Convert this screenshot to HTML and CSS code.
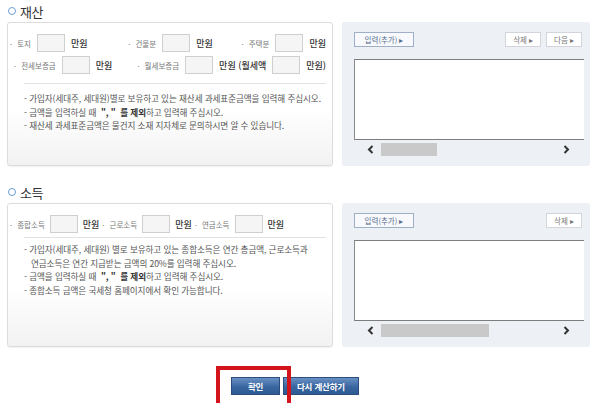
FILE: index.html
```html
<!DOCTYPE html>
<html lang="ko">
<head>
    <meta charset="UTF-8">
    <title>재산 / 소득 입력</title>
    <link rel="stylesheet" href="styles.css">
</head>
<body>
    <div class="page">
        <section class="block">
            <h2 class="block-title"><span class="ring"></span>재산</h2>
            <div class="block-body">
                <div class="form-box">
                    <div class="field-row">
                        <div class="field w120"><span class="label">· 토지</span><input class="amount" type="text"><span class="unit">만원</span></div>
                        <div class="field w115"><span class="label">· 건물분</span><input class="amount" type="text"><span class="unit">만원</span></div>
                        <div class="field"><span class="label">· 주택분</span><input class="amount" type="text"><span class="unit">만원</span></div>
                    </div>
                    <div class="field-row row-shift">
                        <div class="field w131"><span class="label">· 전세보증금</span><input class="amount" type="text"><span class="unit">만원</span></div>
                        <div class="field"><span class="label">· 월세보증금</span><input class="amount" type="text"><span class="unit">만원 (월세액</span><input class="amount" type="text"><span class="unit">만원)</span></div>
                    </div>
                    <hr class="divider">
                    <ul class="notes">
                        <li>- 가입자(세대주, 세대원)별로 보유하고 있는 재산세 과세표준금액을 입력해 주십시오.</li>
                        <li>- 금액을 입력하실 때 &nbsp;<b>",&nbsp;" &nbsp;를 제외</b>하고 입력해 주십시오.</li>
                        <li>- 재산세 과세표준금액은 물건지 소재 지자체로 문의하시면 알 수 있습니다.</li>
                    </ul>
                </div>
                <div class="list-panel">
                    <div class="panel-btns">
                        <button class="sbtn sbtn-add">입력(추가) ▸</button>
                        <span class="spacer"></span>
                        <button class="sbtn">삭제 ▸</button>
                        <button class="sbtn">다음 ▸</button>
                    </div>
                    <div class="list-box"></div>
                    <div class="hscroll">
                        <svg class="arr" width="7" height="9" viewBox="0 0 7 9"><path d="M5.5 1 L2 4.5 L5.5 8" fill="none" stroke="#333" stroke-width="2"/></svg>
                        <span class="track"><span class="thumb thumb-sm"></span></span>
                        <svg class="arr" width="7" height="9" viewBox="0 0 7 9"><path d="M1.5 1 L5 4.5 L1.5 8" fill="none" stroke="#333" stroke-width="2"/></svg>
                    </div>
                </div>
            </div>
        </section>

        <section class="block block-next">
            <h2 class="block-title"><span class="ring"></span>소득</h2>
            <div class="block-body">
                <div class="form-box">
                    <div class="field-row row-income">
                        <div class="field"><span class="label">· 종합소득</span><input class="amount" type="text"><span class="unit">만원</span></div>
                        <div class="field"><span class="label">· 근로소득</span><input class="amount" type="text"><span class="unit">만원</span></div>
                        <div class="field"><span class="label">· 연금소득</span><input class="amount" type="text"><span class="unit">만원</span></div>
                    </div>
                    <hr class="divider divider-tight">
                    <ul class="notes notes-tight">
                        <li>- 가입자(세대주, 세대원) 별로 보유하고 있는 종합소득은 연간 총금액, 근로소득과<br>연금소득은 연간 지급받는 금액의 20%를 입력해 주십시오.</li>
                        <li>- 금액을 입력하실 때 &nbsp;<b>",&nbsp;" &nbsp;를 제외</b>하고 입력해 주십시오.</li>
                        <li>- 종합소득 금액은 국세청 홈페이지에서 확인 가능합니다.</li>
                    </ul>
                </div>
                <div class="list-panel">
                    <div class="panel-btns">
                        <button class="sbtn sbtn-add">입력(추가) ▸</button>
                        <span class="spacer"></span>
                        <button class="sbtn">삭제 ▸</button>
                    </div>
                    <div class="list-box"></div>
                    <div class="hscroll">
                        <svg class="arr" width="7" height="9" viewBox="0 0 7 9"><path d="M5.5 1 L2 4.5 L5.5 8" fill="none" stroke="#333" stroke-width="2"/></svg>
                        <span class="track"><span class="thumb thumb-lg"></span></span>
                        <svg class="arr" width="7" height="9" viewBox="0 0 7 9"><path d="M1.5 1 L5 4.5 L1.5 8" fill="none" stroke="#333" stroke-width="2"/></svg>
                    </div>
                </div>
            </div>
        </section>

        <div class="actions">
            <span class="confirm-wrap">
                <button class="bbtn bbtn-ok">확인</button>
                <span class="highlight"></span>
            </span>
            <button class="bbtn">다시 계산하기</button>
        </div>
    </div>
</body>
</html>
```

FILE: styles.css
```css
body {
    margin: 0;
    background-color: #fff;
    font-family: "Noto Sans CJK KR", "Noto Sans", sans-serif;
    color: #333;
    overflow: hidden;
}
.page {
    width: 600px;
    height: 403px;
    padding: 0 10px 0 7px;
    box-sizing: border-box;
}
.block-next {
    margin-top: 15px;
}
.block-title {
    display: flex;
    align-items: center;
    height: 22px;
    margin: 0;
    font-size: 13px;
    font-weight: normal;
    color: #333;
    letter-spacing: -0.5px;
}
.ring {
    width: 6px;
    height: 6px;
    border: 1.5px solid #6b9fd6;
    border-radius: 50%;
    margin: 0 4px 0 1px;
}
.block-body {
    display: flex;
    gap: 9px;
    height: 144px;
}
.form-box {
    width: 326px;
    box-sizing: border-box;
    border: 1px solid #dcdcdc;
    border-radius: 3px;
    background: linear-gradient(#fff 60%, #f2f2f2);
    box-shadow: 0 1px 1px rgba(0,0,0,0.06);
    padding: 11px 6px 0 2px;
}
.field-row {
    display: flex;
    align-items: center;
    height: 18px;
    margin-bottom: 4px;
}
.row-shift {
    padding-left: 4px;
}
.row-income {
    gap: 3px;
}
.field {
    display: flex;
    align-items: center;
    gap: 6px;
}
.row-income .field {
    gap: 5px;
}
.w120 { width: 120px; }
.w115 { width: 115px; }
.w131 { width: 133px; }
.label {
    font-size: 7.5px;
    color: #777;
    white-space: nowrap;
    word-spacing: 3px;
}
.amount {
    width: 28px;
    height: 18px;
    box-sizing: border-box;
    border: 1px solid #cfcfcf;
    background-color: #f5f5f5;
    padding: 0;
    margin: 0;
}
.unit {
    font-size: 9px;
    font-weight: 500;
    color: #333;
    white-space: nowrap;
}
.divider {
    border: none;
    border-top: 1px solid #e2e2e2;
    margin: 9px 0 0 14px;
}
.divider-tight {
    margin-top: 4px;
}
.notes {
    list-style: none;
    margin: 8px 0 0 14px;
    padding: 0;
    font-size: 8.6px;
    line-height: 13.5px;
    color: #555;
    letter-spacing: -0.1px;
}
.notes-tight {
    margin-top: 5px;
}
.notes li {
    padding-left: 7px;
    text-indent: -7px;
}
.notes b {
    color: #333;
}
.list-panel {
    flex: 1;
    background-color: #edf1f5;
    border-radius: 2px;
    padding: 10px 8px 0 12px;
    display: flex;
    flex-direction: column;
}
.panel-btns {
    display: flex;
    gap: 5px;
    height: 15px;
}
.spacer {
    flex: 1;
}
.sbtn {
    height: 15px;
    padding: 0 7px;
    font-family: inherit;
    font-size: 7.5px;
    line-height: 13px;
    color: #777;
    background-color: #fff;
    border: 1px solid #d2d6dc;
    cursor: pointer;
}
.sbtn-add {
    width: 60px;
    padding: 0;
    color: #5a6d8c;
    border-color: #9fb0c6;
    background-color: #f7f9fc;
}
.list-box {
    margin-top: 12px;
    margin-right: -2px;
    height: 81px;
    background-color: #fff;
    border-top: 1px solid #7d7d7d;
    border-left: 1px solid #8a8a8a;
    border-bottom: 1px solid #7d7d7d;
    box-sizing: border-box;
}
.hscroll {
    display: flex;
    align-items: center;
    height: 15px;
    margin-top: 2px;
    padding: 0 12px 0 13px;
    gap: 7px;
}
.track {
    flex: 1;
    height: 13px;
    display: flex;
}
.thumb {
    background-color: #c9c9c9;
}
.thumb-sm { width: 56px; }
.thumb-lg { width: 108px; }
.actions {
    display: flex;
    margin-top: 30px;
    padding-left: 224px;
    gap: 3px;
}
.confirm-wrap {
    position: relative;
    display: flex;
}
.bbtn {
    height: 18px;
    padding: 0 13px;
    font-family: inherit;
    font-size: 8.5px;
    font-weight: bold;
    color: #fff;
    background: linear-gradient(#6890c4, #3a66a0 55%, #2e5a94);
    border: 1px solid #2b4e7e;
    cursor: pointer;
    letter-spacing: -0.2px;
}
.bbtn-ok {
    width: 49px;
}
.highlight {
    position: absolute;
    left: -15px;
    top: -11px;
    width: 75px;
    height: 45px;
    box-sizing: border-box;
    border: 4px solid #d3141c;
}
```
